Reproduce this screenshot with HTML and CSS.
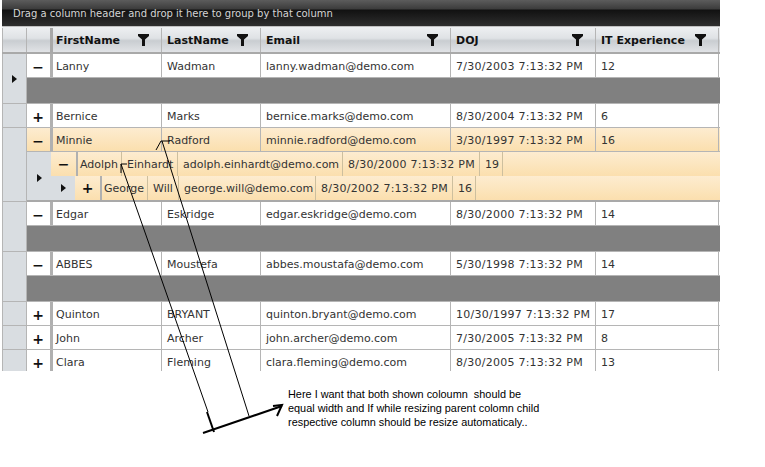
FILE: index.html
```html
<!DOCTYPE html>
<html>
<head>
<meta charset="utf-8">
<title>Grid</title>
<link rel="stylesheet" href="styles.css">
</head>
<body>
<div class="page">
  <div class="grid">
    <div class="groupbar"><span>Drag a column header and drop it here to group by that column</span></div>
    <div class="row header">
      <div class="ind"></div><div class="exp"></div>
      <div class="c c1"><b>FirstName</b><svg class="fil" viewBox="0 0 11 12"><path d="M0 0H11V2L7 5.5V12H4V5.5L0 2Z"/></svg></div>
      <div class="c c2"><b>LastName</b><svg class="fil" viewBox="0 0 11 12"><path d="M0 0H11V2L7 5.5V12H4V5.5L0 2Z"/></svg></div>
      <div class="c c3"><b>Email</b><svg class="fil" viewBox="0 0 11 12"><path d="M0 0H11V2L7 5.5V12H4V5.5L0 2Z"/></svg></div>
      <div class="c c4"><b>DOJ</b><svg class="fil" viewBox="0 0 11 12"><path d="M0 0H11V2L7 5.5V12H4V5.5L0 2Z"/></svg></div>
      <div class="c c5"><b>IT Experience</b><svg class="fil" viewBox="0 0 11 12"><path d="M0 0H11V2L7 5.5V12H4V5.5L0 2Z"/></svg></div>
    </div>

    <div class="group">
      <div class="ind"><i class="tri"></i></div>
      <div class="gbody">
        <div class="row"><div class="exp">−</div><div class="c c1">Lanny</div><div class="c c2">Wadman</div><div class="c c3">lanny.wadman@demo.com</div><div class="c c4">7/30/2003 7:13:32 PM</div><div class="c c5">12</div></div>
        <div class="detail"></div>
      </div>
    </div>

    <div class="group">
      <div class="ind"></div>
      <div class="gbody">
        <div class="row"><div class="exp">+</div><div class="c c1">Bernice</div><div class="c c2">Marks</div><div class="c c3">bernice.marks@demo.com</div><div class="c c4">8/30/2004 7:13:32 PM</div><div class="c c5">6</div></div>
      </div>
    </div>

    <div class="group">
      <div class="ind"></div>
      <div class="gbody">
        <div class="row sel"><div class="exp">−</div><div class="c c1">Minnie</div><div class="c c2">Radford</div><div class="c c3">minnie.radford@demo.com</div><div class="c c4">3/30/1997 7:13:32 PM</div><div class="c c5">16</div></div>
        <div class="nested">
          <div class="gutter"><i class="tri"></i></div>
          <div class="nrows">
            <div class="nrow">
              <div class="exp">−</div>
              <div class="c n1">Adolph</div><div class="c n2">Einhardt</div><div class="c n3">adolph.einhardt@demo.com</div><div class="c n4">8/30/2000 7:13:32 PM</div><div class="c n5">19</div>
            </div>
            <div class="nrow">
              <div class="nind"><i class="tri"></i></div><div class="exp">+</div>
              <div class="c m1">George</div><div class="c m2">Will</div><div class="c m3">george.will@demo.com</div><div class="c n4">8/30/2002 7:13:32 PM</div><div class="c n5">16</div>
            </div>
          </div>
        </div>
      </div>
    </div>

    <div class="group">
      <div class="ind"></div>
      <div class="gbody">
        <div class="row"><div class="exp">−</div><div class="c c1">Edgar</div><div class="c c2">Eskridge</div><div class="c c3">edgar.eskridge@demo.com</div><div class="c c4">8/30/2000 7:13:32 PM</div><div class="c c5">14</div></div>
        <div class="detail"></div>
      </div>
    </div>

    <div class="group">
      <div class="ind"></div>
      <div class="gbody">
        <div class="row"><div class="exp">−</div><div class="c c1">ABBES</div><div class="c c2">Moustefa</div><div class="c c3">abbes.moustafa@demo.com</div><div class="c c4">5/30/1998 7:13:32 PM</div><div class="c c5">14</div></div>
        <div class="detail"></div>
      </div>
    </div>

    <div class="group">
      <div class="ind"></div>
      <div class="gbody">
        <div class="row"><div class="exp">+</div><div class="c c1">Quinton</div><div class="c c2">BRYANT</div><div class="c c3">quinton.bryant@demo.com</div><div class="c c4">10/30/1997 7:13:32 PM</div><div class="c c5">17</div></div>
      </div>
    </div>
    <div class="group">
      <div class="ind"></div>
      <div class="gbody">
        <div class="row"><div class="exp">+</div><div class="c c1">John</div><div class="c c2">Archer</div><div class="c c3">john.archer@demo.com</div><div class="c c4">7/30/2005 7:13:32 PM</div><div class="c c5">8</div></div>
      </div>
    </div>
    <div class="group">
      <div class="ind"></div>
      <div class="gbody">
        <div class="row"><div class="exp">+</div><div class="c c1">Clara</div><div class="c c2">Fleming</div><div class="c c3">clara.fleming@demo.com</div><div class="c c4">8/30/2005 7:13:32 PM</div><div class="c c5">13</div></div>
      </div>
    </div>
  </div>

  <svg class="marks" viewBox="0 0 765 467" width="765" height="467">
    <g fill="none" stroke="#000" stroke-width="1">
      <path d="M121 164L208 412"/>
      <path d="M127 164H121V173"/>
      <path d="M162 141L249 416"/>
      <path d="M170 141H161L156 150"/>
    </g>
    <g fill="none" stroke="#000" stroke-width="2">
      <path d="M203 433L282 406"/>
      <path d="M273 406L282 405L277 416"/>
      <path d="M207 412L214 432"/>
    </g>
  </svg>
  <p class="note">Here I want that both shown coloumn&nbsp; should be<br>equal width and If while resizing parent colomn child<br>respective column should be resize automaticaly..</p>
</div>
</body>
</html>
```
FILE: styles.css
```css
* { box-sizing: border-box; }
html, body { margin: 0; padding: 0; background: #fff; }
.page {
  position: relative;
  width: 765px;
  height: 467px;
  overflow: hidden;
  font-family: "DejaVu Sans", sans-serif;
  font-size: 11px;
  color: #333;
}
.grid {
  width: 718px;
  height: 371px;
  margin-left: 2px;
  overflow: hidden;
  background: #fff;
}
.groupbar {
  height: 26px;
  padding: 8px 0 0 11px;
  font-size: 10px;
  line-height: 12px;
  color: #d4d4d4;
  background: linear-gradient(#5c5c5c 0, #3c3c3c 9px, #111 10px, #2e2e2e 100%);
}
.row { display: flex; height: 24px; border-bottom: 1px solid #b5b5b5; }
.header {
  height: 28px;
  padding-top: 1px;
  border-top: 1px solid #c0c0c0;
  border-bottom: 2px solid #a9a9a9;
  background: linear-gradient(#eef0f2 0, #dfe2e5 45%, #c9cdd1 55%, #e1e3e6 100%);
  color: #111;
}
.header .ind { background: transparent; border-bottom: 0; }
.header .exp { background: transparent; border-right: 3px solid #a8a8a8; padding-top: 0; }
.header .c { justify-content: space-between; padding-top: 0; padding-right: 12px; letter-spacing: 0; }
.header b { font-weight: 700; font-size: 11px; }
.fil { width: 11px; height: 12px; fill: #111; flex: none; }
.ind {
  width: 25px;
  flex: none;
  background: #d9dde1;
  border-right: 1px solid #b5b5b5;
  border-bottom: 1px solid #b5b5b5;
  border-left: 1px solid #b5b5b5;
  display: flex;
  align-items: center;
  justify-content: center;
}
.exp {
  width: 26px;
  flex: none;
  padding-top: 2px;
  padding-right: 1px;
  display: flex;
  align-items: center;
  justify-content: center;
  font-weight: 700;
  font-size: 14px;
  color: #111;
  border-right: 3px solid #b0b0b0;
}
.c {
  flex: none;
  display: flex;
  align-items: center;
  padding-top: 2px;
  padding-left: 5px;
  white-space: nowrap;
  overflow: hidden;
  border-right: 1px solid #b5b5b5;
}
.c1 { width: 109px; padding-left: 3px; }
.c2 { width: 99px; }
.c3 { width: 190px; }
.c4 { width: 145px; letter-spacing: 0.25px; }
.c5 { width: 123px; }
.group { display: flex; }
.gbody { flex: 1; min-width: 0; }
.detail { height: 26px; background: #808080; border-bottom: 1px solid #b5b5b5; }
.tri {
  display: block;
  width: 0;
  height: 0;
  border-left: 5px solid #111;
  border-top: 4px solid transparent;
  border-bottom: 4px solid transparent;
}
.row.sel { background: linear-gradient(#fdecd0, #fbdfae); }
.nested { display: flex; height: 50px; border-bottom: 2px solid #a9a9a9; }
.gutter {
  width: 24px;
  flex: none;
  padding-top: 3px;
  background: #d9dde1;
  display: flex;
  align-items: center;
  justify-content: center;
}
.nrows { flex: 1; min-width: 0; }
.nrow { display: flex; height: 24px; background: linear-gradient(#fdecd0, #fbdfae); }
.nrow .exp { width: 27px; padding-top: 0; padding-right: 0; border-right-width: 2px; }
.nind {
  width: 24px;
  flex: none;
  background: #d9dde1;
  display: flex;
  align-items: center;
  justify-content: center;
}
.nrow .c { padding-top: 0; border-right: 1px solid #cdbf9e; }
.n1 { width: 44px; padding-left: 2px; }
.n2 { width: 56px; }
.n3 { width: 165px; }
.n4 { width: 137px; letter-spacing: 0.25px; }
.n5 { width: 23px; }
.m1 { width: 46px; padding-left: 2px; }
.m2 { width: 31px; }
.m3 { width: 137px; }
.marks { position: absolute; left: 0; top: 0; pointer-events: none; }
.note {
  position: absolute;
  left: 288px;
  top: 387px;
  margin: 0;
  font-family: "Liberation Sans", sans-serif;
  font-size: 10.9px;
  line-height: 14px;
  color: #000;
  white-space: nowrap;
}
```
